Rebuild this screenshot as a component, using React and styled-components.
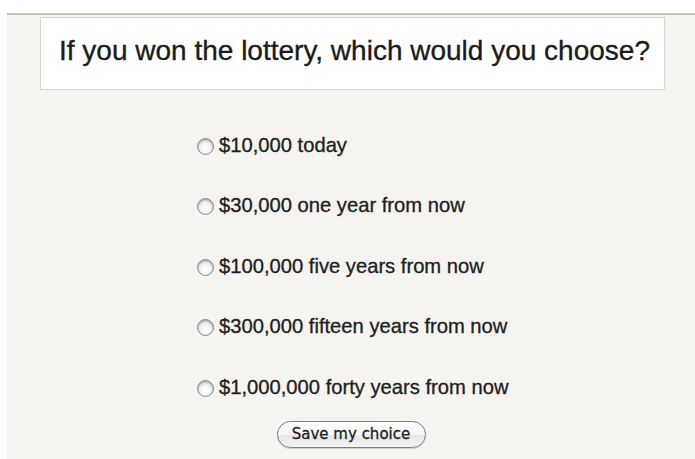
import React, { useState } from "react";
import styled, { createGlobalStyle } from "styled-components";

const Global = createGlobalStyle`
  html, body {
    margin: 0;
    padding: 0;
    background: #ffffff;
    height: 100%;
  }
  #root {
    height: 100%;
  }
`;

const Page = styled.div`
  height: 459px;
  padding: 13px 0 0 7px;
  box-sizing: border-box;
  display: flex;
`;

const Panel = styled.form`
  flex: 1;
  background: #f5f4f0;
  border-top: 2px solid #c8c1b6;
  display: flex;
  flex-direction: column;
  align-items: center;
  font-family: "Liberation Sans", Arial, sans-serif;
`;

const QuestionBox = styled.div`
  align-self: flex-start;
  margin: 2px 0 0 33px;
  width: 625px;
  height: 73px;
  box-sizing: border-box;
  background: #ffffff;
  border: 1.5px solid #d8d5ce;
  display: flex;
  align-items: center;
  justify-content: center;
  font-size: 28px;
  color: #1b1b1b;
  -webkit-text-stroke: 0.35px #1b1b1b;
  padding: 0 0 6px 4px;
`;

const Options = styled.div`
  margin-top: 24.75px;
  display: flex;
  flex-direction: column;
  align-self: flex-start;
  margin-left: 190px;
`;

const OptionRow = styled.label`
  height: 60.5px;
  display: flex;
  align-items: center;
  gap: 5px;
  font-size: 20.2px;
  color: #202020;
  -webkit-text-stroke: 0.3px #202020;
  cursor: pointer;
`;

const Radio = styled.input.attrs({ type: "radio" })`
  appearance: none;
  -webkit-appearance: none;
  margin: 0;
  width: 17px;
  height: 17px;
  border-radius: 50%;
  border: 1px solid #8a8a8a;
  box-sizing: border-box;
  background: radial-gradient(circle at 50% 65%, #ffffff 0%, #f4f4f4 40%, #d0d0d0 100%);
  box-shadow: inset 0 1px 2px rgba(0, 0, 0, 0.3), 0 1px 0 rgba(255, 255, 255, 0.7);
  flex: none;
  position: relative;
  top: 1px;

  &:checked {
    background: radial-gradient(circle at 50% 50%, #1f3f8a 0 3px, #6ea3e8 4px, #3f7bd6 100%);
    border-color: #4a6aa0;
  }
`;

const SaveButton = styled.button`
  margin-top: 4px;
  width: 149px;
  height: 27px;
  border-radius: 14px;
  border: 1px solid #7d7d7d;
  background: linear-gradient(#ffffff 0%, #f6f6f6 50%, #e6e6e6 51%, #f4f4f4 100%);
  box-shadow: 0 1px 1px rgba(0, 0, 0, 0.15);
  font-family: "DejaVu Sans", "Liberation Sans", sans-serif;
  font-size: 15px;
  color: #222;
  -webkit-text-stroke: 0.3px #222;
  padding: 0 0 1px;
  cursor: pointer;
`;

const choices = [
  "$10,000 today",
  "$30,000 one year from now",
  "$100,000 five years from now",
  "$300,000 fifteen years from now",
  "$1,000,000 forty years from now",
];

export default function App() {
  const [picked, setPicked] = useState(null);
  return (
    <>
      <Global />
      <Page>
        <Panel onSubmit={(e) => e.preventDefault()}>
          <QuestionBox>If you won the lottery, which would you choose?</QuestionBox>
          <Options>
            {choices.map((c, i) => (
              <OptionRow key={c}>
                <Radio
                  name="choice"
                  checked={picked === i}
                  onChange={() => setPicked(i)}
                />
                {c}
              </OptionRow>
            ))}
          </Options>
          <SaveButton type="submit">Save my choice</SaveButton>
        </Panel>
      </Page>
    </>
  );
}
